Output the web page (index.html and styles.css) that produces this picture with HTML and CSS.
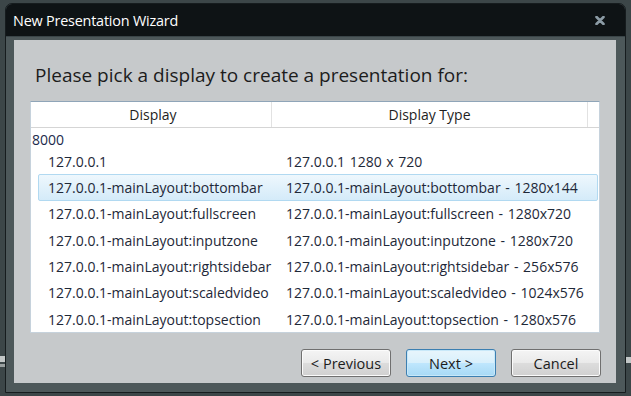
FILE: index.html
```html
<!DOCTYPE html>
<html lang="en">
<head>
  <meta charset="UTF-8">
  <title>New Presentation Wizard</title>
  <link rel="stylesheet" href="styles.css">
</head>
<body>
  <div class="window">
    <div class="titlebar">
      <span class="title">New Presentation Wizard</span>
      <svg class="close" width="10" height="9" viewBox="0 0 10 9">
        <path d="M1.5 1 L8.5 8 M8.5 1 L1.5 8" stroke="#8b9ba5" stroke-width="2.6" stroke-linecap="round"/>
      </svg>
    </div>

    <div class="content">
      <h1 class="prompt">Please pick a display to create a presentation for:</h1>

      <div class="list">
        <div class="list-header">
          <div class="col-head col-display">Display</div>
          <div class="col-head col-type">Display Type</div>
          <div class="col-head col-fill"></div>
        </div>

        <div class="group">8000</div>

        <div class="row">
          <span class="cell">127.0.0.1</span>
          <span class="cell cell-type">127.0.0.1 1280 x 720</span>
        </div>
        <div class="row selected">
          <span class="cell">127.0.0.1-mainLayout:bottombar</span>
          <span class="cell cell-type">127.0.0.1-mainLayout:bottombar - 1280x144</span>
        </div>
        <div class="row">
          <span class="cell">127.0.0.1-mainLayout:fullscreen</span>
          <span class="cell cell-type">127.0.0.1-mainLayout:fullscreen - 1280x720</span>
        </div>
        <div class="row">
          <span class="cell">127.0.0.1-mainLayout:inputzone</span>
          <span class="cell cell-type">127.0.0.1-mainLayout:inputzone - 1280x720</span>
        </div>
        <div class="row">
          <span class="cell">127.0.0.1-mainLayout:rightsidebar</span>
          <span class="cell cell-type">127.0.0.1-mainLayout:rightsidebar - 256x576</span>
        </div>
        <div class="row">
          <span class="cell">127.0.0.1-mainLayout:scaledvideo</span>
          <span class="cell cell-type">127.0.0.1-mainLayout:scaledvideo - 1024x576</span>
        </div>
        <div class="row">
          <span class="cell">127.0.0.1-mainLayout:topsection</span>
          <span class="cell cell-type">127.0.0.1-mainLayout:topsection - 1280x576</span>
        </div>
      </div>

      <div class="buttons">
        <button class="btn">&lt; Previous</button>
        <button class="btn btn-default">Next &gt;</button>
        <button class="btn">Cancel</button>
      </div>
    </div>
  </div>
</body>
</html>
```

FILE: styles.css
```css
/* Reset */
* {
  margin: 0;
  padding: 0;
  box-sizing: border-box;
}

html {
  background-color: #3c4648;
  /* bits of whatever sits behind the dialog */
  background-image:
    linear-gradient(#c3c7c7, #c3c7c7),
    linear-gradient(#9aa0a0, #9aa0a0),
    linear-gradient(#c3c7c7, #c3c7c7);
  background-repeat: no-repeat;
  background-size: 5px 6px, 5px 3px, 5px 6px;
  background-position: 0 356px, 0 364px, 626px 357px;
  height: 100%;
}

body {
  font-family: "Open Sans", "Noto Sans", sans-serif;
  overflow: hidden;
}

.window {
  width: 621px;
  height: 390px;
  margin: 3px 0 0 5px;
  background-color: #4d585a;
  border: 1px solid #161c1e;
  border-radius: 7px 7px 0 0;
  box-shadow: inset 0 1px 0 #56626a;
}

.titlebar {
  height: 33px;
  display: flex;
  align-items: center;
  justify-content: space-between;
  padding: 0 20px 0 7px;
  background-color: #0e1315;
  border-bottom: 1px solid #3a4548;
  border-radius: 6px 6px 0 0;
}

.title {
  color: #ffffff;
  font-size: 14.4px;
  letter-spacing: -0.2px;
}

.close {
  margin-top: 1px;
}

.content {
  height: 343px;
  margin: 3px 9px 0 8px;
  padding: 0 0 0 16px;
  background-color: #c6c9cb;
}

.prompt {
  height: 61px;
  padding: 22px 0 0 5px;
  font-size: 19px;
  font-weight: normal;
  line-height: 26px;
  color: #1c1c1c;
}

.list {
  width: 570px;
  height: 232px;
  background-color: #ffffff;
  border: 1px solid #c6d2dc;
  border-top-color: #8fa5b8;
  font-size: 14px;
  color: #1e2838;
}

.list-header {
  display: flex;
  height: 26px;
  border-bottom: 1px solid #d5d5d5;
  color: #1e1e1e;
  font-size: 14px;
}

.col-head {
  line-height: 25px;
  text-align: center;
  border-right: 1px solid #e2e2e2;
}

.col-display {
  width: 241px;
  padding-left: 4px;
}

.col-type {
  width: 316px;
}

.col-fill {
  border-right: none;
}

.group {
  height: 20px;
  padding-left: 1px;
  line-height: 24px;
  color: #1b2a4c;
}

.row {
  display: grid;
  grid-template-columns: 234px 1fr;
  height: 26.33px;
  margin: 0 1px 0 7px;
  align-items: center;
  border: 1px solid transparent;
  border-radius: 2px;
}

.row.selected {
  background: linear-gradient(#eef7fd, #d4ebf9);
  border-color: #b1d9f1;
}

.cell {
  padding-left: 9px;
  white-space: nowrap;
}

.cell-type {
  padding-left: 13px;
  word-spacing: 1px;
}

.buttons {
  display: flex;
  justify-content: flex-end;
  gap: 15px;
  margin-top: 16px;
  padding-right: 15px;
}

.btn {
  width: 90px;
  height: 28px;
  font-family: "Open Sans", "Noto Sans", sans-serif;
  font-size: 14.5px;
  color: #1c1c1c;
  background: linear-gradient(#f4f4f4 0%, #eaeaea 48%, #dcdcdc 52%, #d0d0d0 100%);
  border: 1px solid #707070;
  border-radius: 3px;
  box-shadow: inset 0 0 0 1px #fbfbfb;
}

.btn-default {
  background: linear-gradient(#e8f5fc 0%, #d9f0fc 48%, #bee6fd 52%, #a7d9f5 100%);
  border-color: #3c7fb1;
  box-shadow: inset 0 0 0 1px #c8e8f9;
}
```
